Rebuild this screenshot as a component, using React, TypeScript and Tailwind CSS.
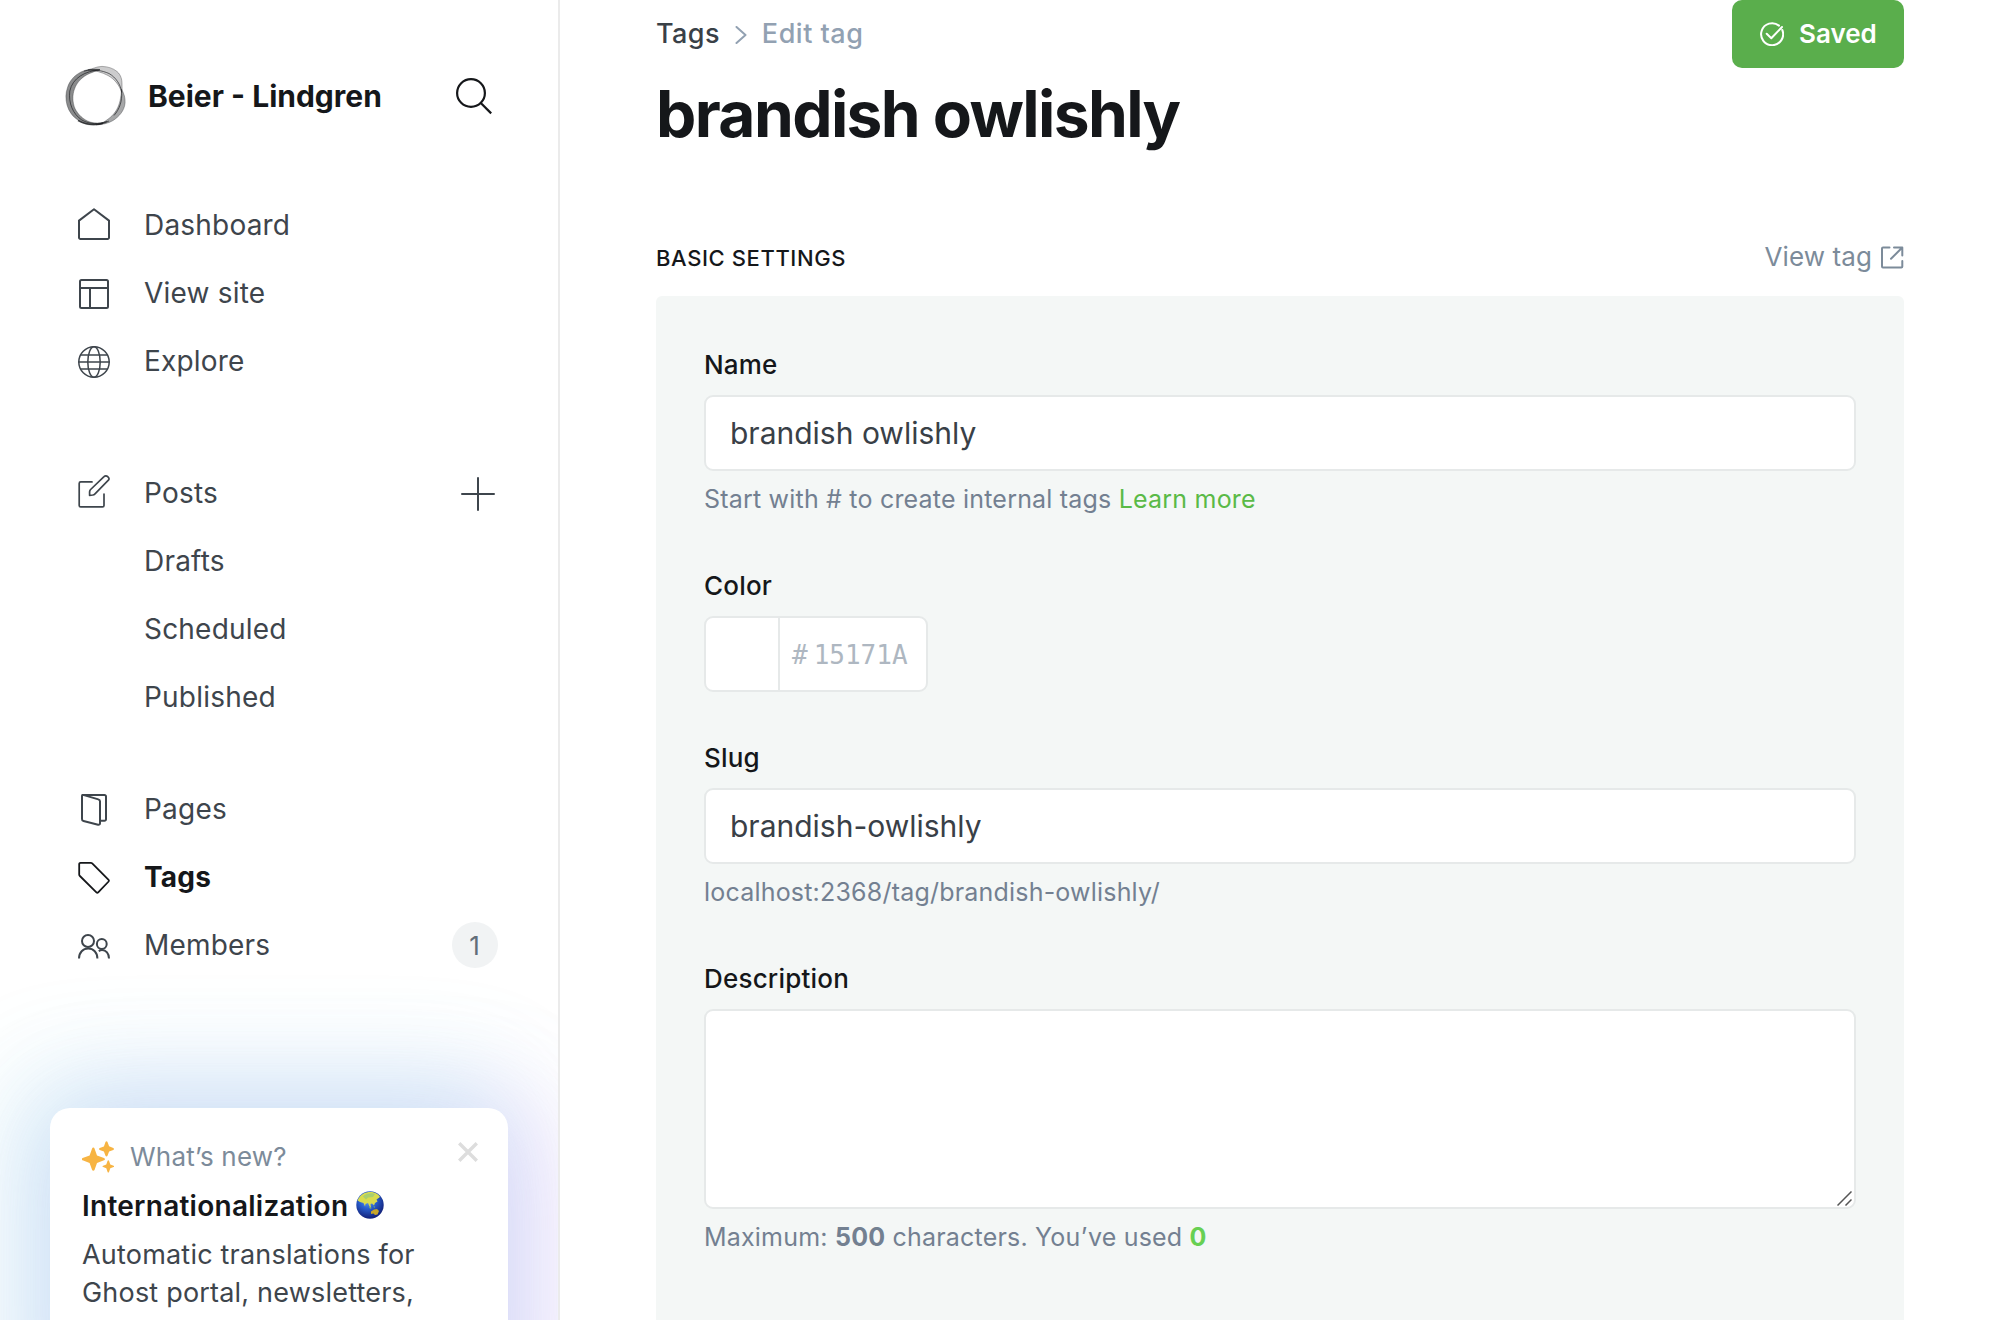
import type { ReactNode } from "react";

const line = {
  fill: "none",
  stroke: "currentColor",
  strokeWidth: 2,
  strokeLinecap: "round" as const,
  strokeLinejoin: "round" as const,
};

function Icon({ children, viewBox = "0 0 32 32" }: { children: ReactNode; viewBox?: string }) {
  return (
    <svg viewBox={viewBox} className="size-8 shrink-0 overflow-visible" {...line}>
      {children}
    </svg>
  );
}

const HomeIcon = () => (
  <Icon viewBox="0 1 32 32">
    <path d="M1 12.600 16 1.200l15 11.400V29.500A1.500 1.500 0 0 1 29.500 31h-27A1.500 1.500 0 0 1 1 29.500Z" />
  </Icon>
);
const LayoutIcon = () => (
  <Icon viewBox="0 1 32 32">
    <rect x="2" y="4" width="28" height="28" rx="1.500" />
    <path d="M2 12h28M12 12v20" />
  </Icon>
);
const GlobeIcon = () => (
  <Icon viewBox="0 1 32 32">
    <g strokeWidth="1.500">
      <circle cx="16" cy="18" r="15.200" />
      <ellipse cx="16" cy="18" rx="6.200" ry="15.200" />
      <path d="M.8 18h30.400M2.500 11h27M2.500 25h27" />
    </g>
  </Icon>
);
const PostsIcon = () => (
  <Icon viewBox="0 2 32 32">
    <g strokeWidth="1.700">
      <path d="M14 6.900H2.700A1.500 1.500 0 0 0 1.200 8.400v22a1.500 1.500 0 0 0 1.500 1.500h21.800a1.500 1.500 0 0 0 1.500-1.500V19" />
      <path d="M11.600 20.300v-3.500a4 4 0 0 1 1-2.300L26 1.600a2.600 2.600 0 0 1 3.700 0l.7.700a2 2 0 0 1 0 2.900L17 18.800a4 4 0 0 1-2.300 1.200Z" />
    </g>
  </Icon>
);
const PagesIcon = () => (
  <Icon>
    <path d="M4.500 2h22a1.500 1.500 0 0 1 1.500 1.500v22.800a1.500 1.500 0 0 1-1.500 1.500H22.500" />
    <path d="M4 3.300c0-1 .9-1.500 1.900-1.200l14.500 4.300A2 2 0 0 1 22 8.300v22c0 1-.9 1.700-1.900 1.400L5.500 28A2 2 0 0 1 4 26Z" />
  </Icon>
);
const TagIcon = () => (
  <Icon>
    <path strokeWidth="1.800" d="M2.500 1.800H12.800a2 2 0 0 1 1.400.6L30.600 18.800a1.300 1.300 0 0 1 0 1.700L20.200 31.300a1.300 1.300 0 0 1-1.800 0L1.900 15a2 2 0 0 1-.7-1.500V3.100a1.300 1.300 0 0 1 1.300-1.300Z" />
  </Icon>
);
const MembersIcon = () => (
  <Icon>
    <g strokeLinecap="butt">
      <circle cx="10" cy="12" r="6" />
      <circle cx="23.800" cy="15" r="4.900" />
      <path d="M1 29.600C1 23.500 5 19.500 10.200 19.500S19.400 23.500 19.400 29.600" />
      <path d="M20.800 22.300c1-.8 2-1.200 3.200-1.200 4 0 7 3.500 7 8.500" />
    </g>
  </Icon>
);

function NavRow({ icon, label, active, trailing }: { icon?: ReactNode; label: string; active?: boolean; trailing?: ReactNode }) {
  return (
    <li className="flex h-[68px] items-center">
      <span className={active ? "w-[66px] text-[#15171a]" : "w-[66px]"}>{icon}</span>
      <span className={active ? "flex-1 font-bold tracking-[0.2px] text-[#15171a]" : "flex-1 tracking-[0.2px]"}>{label}</span>
      {trailing}
    </li>
  );
}

function Logo() {
  return (
    <svg viewBox="0 0 64 64" className="size-16 shrink-0" fill="none" stroke="#15171a" strokeLinejoin="round">
      <g fill="#15171a" strokeWidth="0.600">
        <path
          fillOpacity="0.500"
          strokeOpacity="0.500"
          d="M36 5.500C28 4.500 22 5.500 17 8 10 11.500 5.500 17 3.500 23.500 1.500 29 1.400 35 3 41c2 7 6 12 11.500 15.500C19 60 25 61.300 31 61c5-.2 10-1.400 14-4-6 2-13 2.800-19 1C19 55.500 14 50.500 11 44.500 8.500 38.500 8.200 31 10.500 25 13 18 18.500 12.500 25.500 9.500 29 8 32.500 6.800 36 5.500Z"
        />
        <path
          fillOpacity="0.220"
          strokeOpacity="0.550"
          d="M24 5.800C29 5 32 2.500 38 2.400c6 .2 11 1.800 15 5.100 4 3.500 5 8 5 12.500 0 3 .3 6-.3 8.500C55.500 21.500 51 15.500 44 11.500 38 8.300 31 6.500 24 5.800Z"
        />
        <path
          fillOpacity="0.380"
          strokeOpacity="0.500"
          d="M57.500 25c2.500 4.500 4 9 3.600 14-.8 8-6 13.500-12 17.500-5 3-11 4.300-17 4.300 6-.8 10-4.300 14-7.300 5.500-4.500 8.500-10.500 10-17 .8-4 1.300-7.500 1.400-11.500Z"
        />
      </g>
      <g strokeWidth="0.900" strokeOpacity="0.700">
        <path d="M20 7.200C28 4.500 38 6.500 45 9.500c7 4 11.500 11 12.700 18.500.5 9-2 17-7.700 23.500" />
        <path d="M36 5.800C21 7 8.500 14 5.800 27c-1.500 12 3 23 12 29 8 4.500 17 4.500 25 1.500" />
        <path d="M14 56.500c8 4.300 17 4.800 25 2.800" strokeWidth="1.600" />
      </g>
    </svg>
  );
}

function Sidebar() {
  return (
    <aside className="relative flex w-[560px] shrink-0 flex-col overflow-hidden border-r-2 border-[#ebebeb] bg-white text-[28px] text-[#3e454c]">
      <header className="mt-16 flex h-16 items-center pl-16 pr-[64px] text-[#15171a]">
        <Logo />
        <h2 className="ml-5 flex-1 text-[30px] font-bold">Beier - Lindgren</h2>
        <svg viewBox="0 0 38 38" className="mt-0.5 size-[38px]" {...line} strokeWidth={2.200} strokeLinecap="butt">
          <circle cx="15" cy="15" r="13.900" />
          <path d="m24.800 25 10.400 10.400" />
        </svg>
      </header>
      <nav className="mt-[63px] pl-[78px] pr-[60px]">
        <ul>
          <NavRow icon={<HomeIcon />} label="Dashboard" />
          <NavRow icon={<LayoutIcon />} label="View site" />
          <NavRow icon={<GlobeIcon />} label="Explore" />
        </ul>
        <ul className="mt-16">
          <NavRow
            icon={<PostsIcon />}
            label="Posts"
            trailing={
              <svg viewBox="0 0 34 34" className="mr-[3px] mt-0.5 size-[34px]" {...line}>
                <path d="M17 1v32M1 17h32" />
              </svg>
            }
          />
          <NavRow label="Drafts" />
          <NavRow label="Scheduled" />
          <NavRow label="Published" />
        </ul>
        <ul className="mt-11">
          <NavRow icon={<PagesIcon />} label="Pages" />
          <NavRow icon={<TagIcon />} label="Tags" active />
          <NavRow
            icon={<MembersIcon />}
            label="Members"
            trailing={<span className="flex size-[46px] items-center justify-center rounded-full bg-[#f1f3f4] pr-px text-[26px] text-[#626d79]">1</span>}
          />
        </ul>
      </nav>
      <section className="ml-[50px] mt-[129px] h-[320px] w-[458px] shrink-0 rounded-[20px] bg-white px-8 pt-[31px] shadow-[-16px_-12px_104px_16px_rgba(75,215,220,0.23),16px_12px_104px_16px_rgba(195,103,245,0.26)]">
        <div className="flex h-9 items-center">
          <svg viewBox="0 0 32 32" className="size-8" fill="#f7b443">
            <path d="M11.300 6.500c.6 0 1 .3 1.200.9l2.500 7.100 7 2.500c1.200.4 1.200 1.900 0 2.300l-7 2.600-2.500 7c-.4 1.100-2 1.100-2.400 0l-2.500-7-7-2.600c-1.200-.4-1.200-1.900 0-2.300l7-2.500 2.500-7.100c.2-.6.6-.9 1.200-.9Z" />
            <path d="M24.500.3c.4 0 .8.200 1 .7l1.600 4.300L31.300 7c.9.300.9 1.600 0 1.900l-4.200 1.600-1.600 4.300c-.3.900-1.700.9-2 0l-1.600-4.300L17.700 9c-.9-.3-.9-1.600 0-1.900l4.200-1.700L23.500 1c.2-.5.6-.7 1-.7ZM26.300 19.300c.3 0 .6.200.7.500l1.300 3.600 3.300 1.300c.6.200.6 1.200 0 1.400l-3.300 1.200-1.300 3.600c-.2.700-1.200.7-1.400 0l-1.300-3.600-3.200-1.200c-.7-.2-.7-1.200 0-1.400l3.200-1.300 1.300-3.600c.1-.3.400-.5.700-.5Z" />
          </svg>
          <span className="mb-px ml-4 flex-1 text-[26px] tracking-[0.2px] text-[#7c8b9a]">What’s new?</span>
          <svg viewBox="0 0 20 20" className="mb-[11px] mr-[-2px] size-5" fill="none" stroke="#dddddd" strokeWidth="3.400">
            <path d="m1.200 1.200 17.600 17.600M18.800 1.200 1.200 18.800" />
          </svg>
        </div>
        <h3 className="mt-3 flex h-[38px] items-center text-[28px] font-semibold tracking-[0.26px] text-[#15171a]">
          Internationalization
          <svg viewBox="0 0 28 28" className="mb-[3px] ml-2 size-7">
            <defs>
              <radialGradient id="sea" cx="0.420" cy="0.320" r="0.650">
                <stop offset="0" stopColor="#6fa6ee" />
                <stop offset="0.450" stopColor="#2a62d2" />
                <stop offset="1" stopColor="#14257f" />
              </radialGradient>
            </defs>
            <circle cx="14" cy="14" r="13.700" fill="url(#sea)" />
            <path fill="#d9dc4e" d="M2.500 7.500C6 2 12 .2 18 1.500c2.500.8 5 2.500 6 4.500l-3.500 2.500 1 2-2.500 1.500-1 2.500-2-2-1.500.5.500 3.500-1.500-1-1.500-3.500-2.500 1L9 15.500 7.500 12 4 11 1.500 9.500Z" />
            <path fill="#a9cf6f" d="M7 5.500c3-3 8-4 12-2.500l-2 3-5 .5-2 2Z" />
            <path fill="#c7a529" d="M15 20.500l3-2 3-.5 2 2-1.500 3.500-2.500.5-1.500-1.500-2.500.5Z" />
            <path fill="#8bb85a" d="m13.500 15.500 2 1.200-.5 1-1.800-.8ZM17.500 14.500l1.500 1.500-1 1Z" />
          </svg>
        </h3>
        <p className="mt-[11px] text-[27px] leading-[38px] tracking-[0.2px]">
          Automatic translations for
          <br />
          Ghost portal, newsletters,
        </p>
      </section>
    </aside>
  );
}

const inputBox = "rounded-[9px] border-2 border-[#e6e9e9] bg-white";

function Label({ children }: { children: ReactNode }) {
  return <label className="mb-2.5 block text-[26px] font-medium leading-[41px] tracking-[0.2px] text-[#15171a]">{children}</label>;
}

function Help({ children }: { children: ReactNode }) {
  return <p className="mt-2.5 text-[25px] leading-9 tracking-[0.2px] text-[#738091]">{children}</p>;
}

export default function App() {
  return (
    <div className="flex h-[1320px] w-[2000px] overflow-hidden bg-white font-['Inter',sans-serif] text-[#394047]">
      <Sidebar />
      <main className="flex-1 bg-white px-24">
        <header>
          <div className="flex h-[68px] items-center justify-between">
            <div className="flex items-center text-[27px] font-medium tracking-[0.4px]">
              <span>Tags</span>
              <svg viewBox="0 0 12 18" className="ml-[15px] mr-[15px] mt-0.5 h-[18px] w-3" {...line} stroke="#92a1b2">
                <path d="m1.500 1 9 8-9 8" />
              </svg>
              <span className="tracking-[0.5px] text-[#92a1b2]">Edit tag</span>
            </div>
            <button className="flex h-[68px] w-[172px] items-center rounded-[10px] bg-[#5aae4c] pl-7 text-[26px] font-semibold text-white">
              <svg viewBox="0 0 24 24" className="mr-[15px] size-6" {...line}>
                <path d="M19 3.600A11 11 0 1 0 22.300 8M6.700 11.800l4.600 4.400L22 5" />
              </svg>
              <span className="mb-0.5">Saved</span>
            </button>
          </div>
          <h1 className="mt-2 text-[64px] font-bold leading-[76px] tracking-[-1.6px] text-[#15171a]">brandish owlishly</h1>
        </header>
        <section className="mt-[84px]">
          <div className="flex h-11 items-center justify-between">
            <h4 className="text-[22px] font-medium tracking-[0.6px] text-[#15171a]">BASIC SETTINGS</h4>
            <a className="mb-[3px] flex items-center text-[26px] tracking-[0.1px] text-[#7c8b9a]">
              View tag
              <svg viewBox="0 0 24 24" className="ml-2 size-6" {...line}>
                <path d="M9.500 2.500H3a1 1 0 0 0-1 1V21.500a1 1 0 0 0 1 1H21.300a1 1 0 0 0 1-1V16M14 2.500h8.300v8M22 2.800 11 13.800" />
              </svg>
            </a>
          </div>
          <div className="mt-4 h-[1100px] rounded-md bg-[#f4f7f6] p-12">
            <Label>Name</Label>
            <input className={`${inputBox} block h-[76px] w-full px-6 text-[30px]`} defaultValue="brandish owlishly" />
            <Help>
              Start with # to create internal tags <span className="text-[#5aba47]">Learn more</span>
            </Help>
            <div className="mt-12">
              <Label>Color</Label>
              <div className={`${inputBox} flex h-[76px] w-[224px] items-center font-['DejaVu_Sans_Mono',monospace] text-[26px] text-[#aeb7c1]`}>
                <div className="h-full w-[74px] border-r-2 border-[#e6e9e9]" />
                <span className="ml-3 mt-0.5">#</span>
                <span className="ml-[6px] mt-0.5">15171A</span>
              </div>
            </div>
            <div className="mt-[45px]">
              <Label>Slug</Label>
              <input className={`${inputBox} block h-[76px] w-full px-6 text-[30px]`} defaultValue="brandish-owlishly" />
              <Help>localhost:2368/tag/brandish-owlishly/</Help>
            </div>
            <div className="mt-12">
              <Label>Description</Label>
              <div className="relative">
                <textarea className={`${inputBox} block h-[200px] w-full resize-none`} />
                <svg viewBox="0 0 15 15" className="absolute bottom-[3px] right-1 size-[15px]" fill="none" stroke="#555" strokeWidth="1.500">
                  <path d="M.5 14.500 14.500.5M8.500 14.500l6-6" />
                </svg>
              </div>
              <Help>
                Maximum: <b className="font-bold">500</b> characters. You’ve used <b className="font-bold text-[#67d053]">0</b>
              </Help>
            </div>
          </div>
        </section>
      </main>
    </div>
  );
}
